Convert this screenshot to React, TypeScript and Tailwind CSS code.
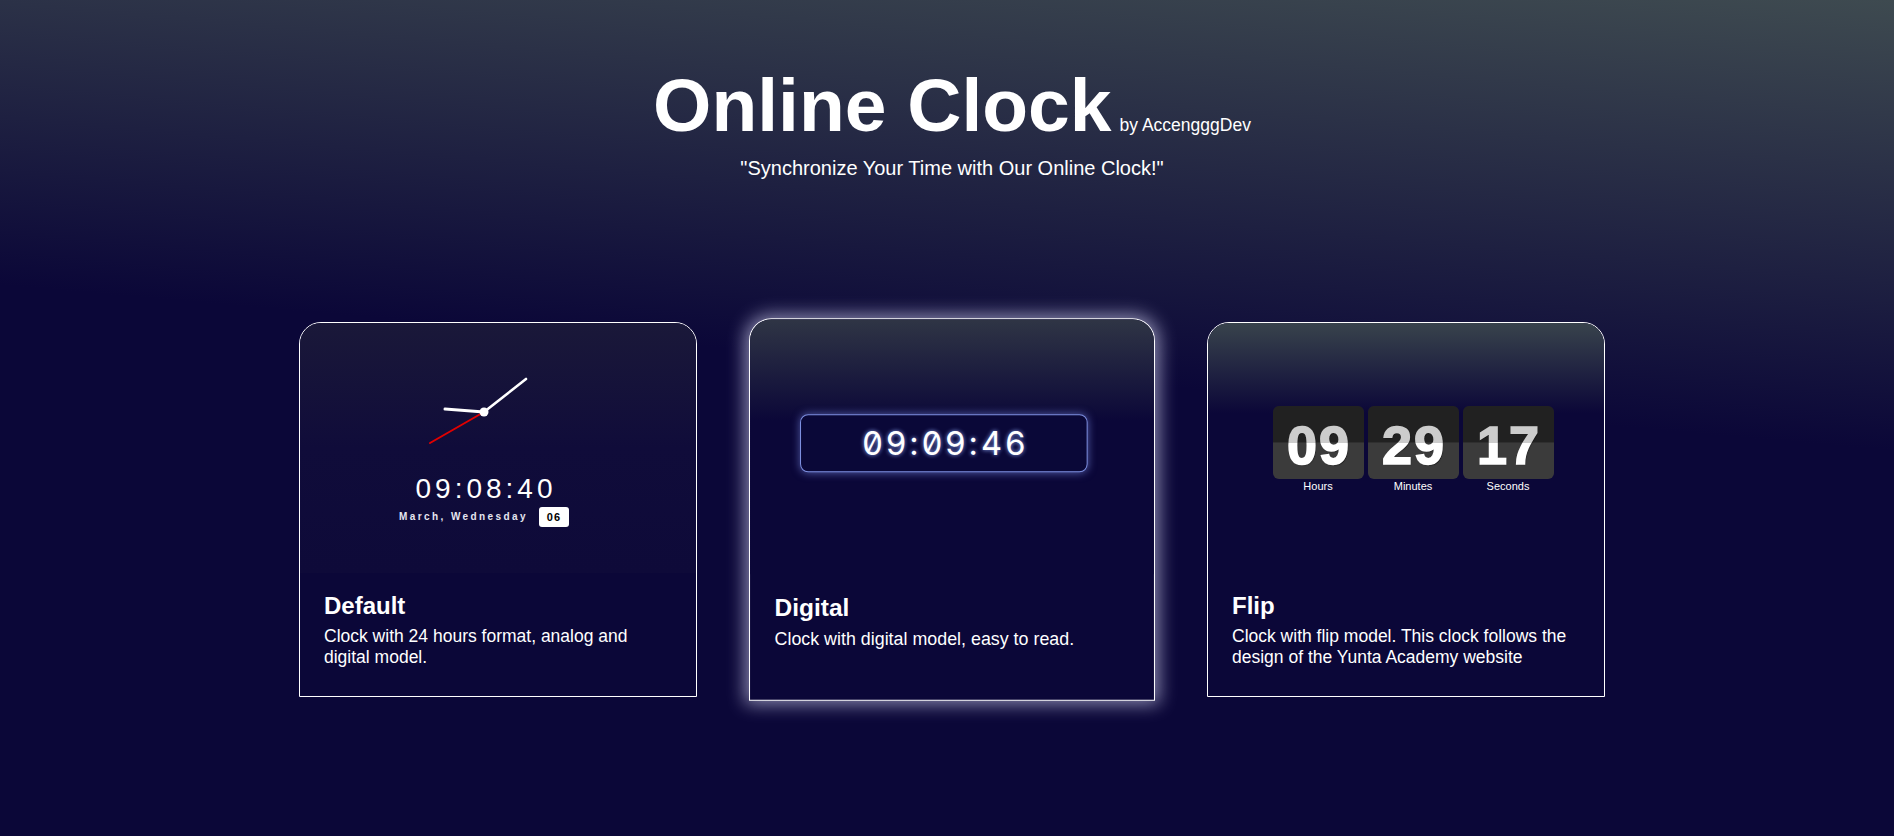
import React from "react";

function AnalogClock() {
  return (
    <svg width="120" height="120" viewBox="0 0 120 120">
      <line x1="60" y1="60" x2="6" y2="91" stroke="#e00000" strokeWidth="2" strokeLinecap="round" />
      <line x1="60" y1="60" x2="21" y2="57" stroke="#ffffff" strokeWidth="3" strokeLinecap="round" />
      <line x1="60" y1="60" x2="102" y2="27" stroke="#ffffff" strokeWidth="2.6" strokeLinecap="round" />
      <circle cx="60" cy="60" r="4.5" fill="#ffffff" />
    </svg>
  );
}

function Card({
  preview,
  title,
  desc,
  className = "",
}: {
  preview: React.ReactNode;
  title: string;
  desc: string;
  className?: string;
}) {
  return (
    <div
      className={
        "w-[398px] h-[375px] shrink-0 rounded-t-[22px] border border-white bg-[#0b0738] overflow-hidden " +
        className
      }
    >
      {preview}
      <div className="px-[24px] pt-[18px]">
        <h2 className="text-[24px] font-bold leading-[29px] text-white">{title}</h2>
        <p className="mt-[6px] text-[17.5px] leading-[21px] text-white">{desc}</p>
      </div>
    </div>
  );
}

function FlipBox({ value, label }: { value: string; label: string }) {
  return (
    <div className="flex flex-col items-center">
      <div className="relative w-[91px] h-[73px] rounded-[6px] overflow-hidden bg-[linear-gradient(180deg,#2a2a2a_50%,#3b3b3b_50%)] flex items-center justify-center">
        <span className="text-[54px] font-bold leading-none text-white tracking-[2px] pt-[4px] pl-[2px] [-webkit-text-stroke:1.6px_white] [text-shadow:1px_1px_1px_rgba(0,0,0,0.6)]">
          {value}
        </span>
        <div className="absolute inset-x-0 top-0 h-1/2 bg-black/20" />
      </div>
      <span className="mt-[1px] text-[11px] leading-[13px] text-white">{label}</span>
    </div>
  );
}

export default function App() {
  return (
    <div className="min-h-screen w-full bg-[linear-gradient(185deg,#3e4a50_0%,#0b0738_45%)] font-['Liberation_Sans',Arial,sans-serif] text-white">
      <div className="flex flex-col items-center pl-[10px] pt-[68px]">
        <h1 className="flex items-baseline">
          <span className="text-[75px] font-bold leading-none">Online Clock</span>
          <span className="ml-[8px] text-[17.5px] leading-none">by AccengggDev</span>
        </h1>
        <p className="mt-[10px] text-[20px] leading-[30px]">"Synchronize Your Time with Our Online Clock!"</p>

        <div className="mt-[139px] flex items-start gap-[56px]">
          <Card
            title="Default"
            desc="Clock with 24 hours format, analog and digital model."
            preview={
              <div className="h-[250px] flex flex-col items-center pr-[28px] pt-[29px] bg-[linear-gradient(180deg,#1a1839_0%,#100c3a_50%,#0e0a39_100%)]">
                <AnalogClock />
                <div className="mt-[1px] text-[28px] leading-[32px] tracking-[4px] pl-[4px] text-white">09:08:40</div>
                <div className="mt-[2px] flex items-center gap-[11px]">
                  <span className="text-[10px] leading-[12px] font-bold tracking-[2.4px] text-[#e6e6f0]">
                    March, Wednesday
                  </span>
                  <span className="w-[30px] h-[20px] rounded-[3px] bg-white text-black text-[11px] font-bold tracking-[1px] flex items-center justify-center">
                    06
                  </span>
                </div>
              </div>
            }
          />
          <Card
            className="relative z-10 scale-[1.02] shadow-[0_0_18px_3px_rgba(225,225,255,0.6)]"
            title="Digital"
            desc="Clock with digital model, easy to read."
            preview={
              <div className="h-[250px] flex flex-col items-center pt-[93px] pr-[16px] bg-[linear-gradient(180deg,#2f3545_0%,#0b0738_40%)]">
                <div className="w-[282px] h-[57px] rounded-[8px] border border-[#7d8fe0] bg-[#0a0838] shadow-[0_0_8px_rgba(140,160,255,0.55)] flex items-center justify-center">
                  <span className="font-['Inter',sans-serif] slashed-zero text-[32px] leading-none tracking-[3px] pl-[3px] text-white [text-shadow:0_0_4px_rgba(150,175,255,0.95)]">
                    09:09:46
                  </span>
                </div>
              </div>
            }
          />
          <Card
            title="Flip"
            desc="Clock with flip model. This clock follows the design of the Yunta Academy website"
            preview={
              <div className="h-[250px] flex flex-col items-center pt-[83px] pl-[14px] bg-[linear-gradient(180deg,#38434c_0%,#0b0738_36%)]">
                <div className="flex gap-[4px]">
                  <FlipBox value="09" label="Hours" />
                  <FlipBox value="29" label="Minutes" />
                  <FlipBox value="17" label="Seconds" />
                </div>
              </div>
            }
          />
        </div>
      </div>
    </div>
  );
}
